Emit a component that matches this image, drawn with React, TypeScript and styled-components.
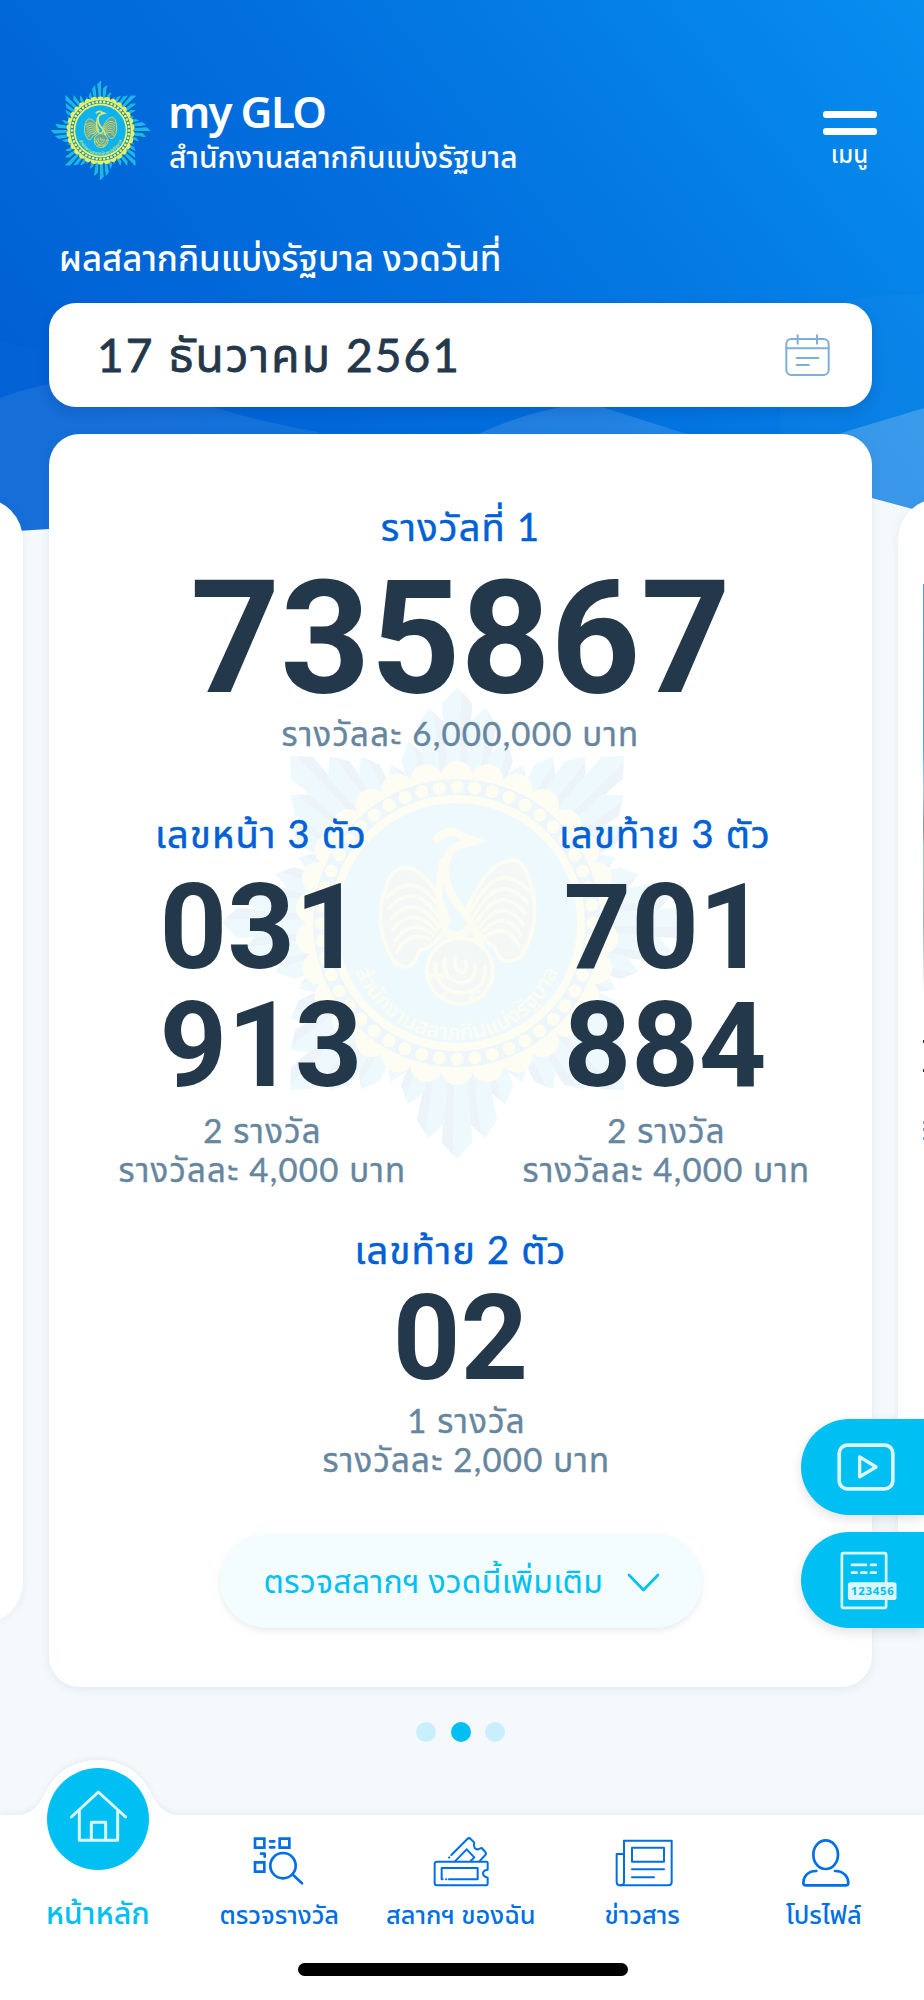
import React, { FC, ReactNode } from "react";
import styled, { createGlobalStyle } from "styled-components";

const colors = {
  white: "#ffffff",
  page: "#f5f9fc",
  blue: "#0060d6",
  navBlue: "#006fe6",
  cyan: "#00c0f3",
  ice: "#dcf6fe",
  navy: "#24384c",
  slate: "#66869f",
};

const fonts = {
  thai: `"Noto Sans Thai", "Noto Sans", sans-serif`,
  mixed: `Lato, "Noto Sans Thai", "Noto Sans", sans-serif`,
  digits: `Roboto, sans-serif`,
};

const GlobalStyle = createGlobalStyle`
  * {
    box-sizing: border-box;
  }
  body {
    margin: 0;
    background: ${colors.page};
    font-family: ${fonts.thai};
  }
`;

const Screen = styled.div`
  position: relative;
  display: flex;
  flex-direction: column;
  width: 924px;
  height: 2000px;
  overflow: hidden;
  background: ${colors.page};
`;

/* ---------- backdrop ---------- */

const Backdrop = styled.svg`
  position: absolute;
  top: 0;
  left: 0;
`;

const HeaderBackdrop: FC = () => (
  <Backdrop width="924" height="540" viewBox="0 0 924 540">
    <defs>
      <linearGradient id="sky" gradientUnits="userSpaceOnUse" x1="120" y1="470" x2="840" y2="-100">
        <stop offset="0" stopColor="#0061d5" />
        <stop offset="0.4" stopColor="#026edd" />
        <stop offset="0.72" stopColor="#047fe6" />
        <stop offset="1" stopColor="#078eef" />
      </linearGradient>
      <clipPath id="skyClip">
        <path d="M0 0H924V512L872 498L700 460H300L49 529L0 532Z" />
      </clipPath>
    </defs>
    <g clipPath="url(#skyClip)">
      <rect width="924" height="540" fill="url(#sky)" />
      <path d="M0 341L60 356L200 400V540H0Z" fill="#fff" opacity="0.01" />
      <path d="M850 300Q885 294 924 294V540H780V320Z" fill="#fff" opacity="0.025" />
      <path d="M0 398Q60 374 130 386L213 407Q265 423 318 432L360 540H0Z" fill="#fff" opacity="0.08" />
      <path d="M478 434Q560 398 602 407L690 435V540H478Z" fill="#fff" opacity="0.13" />
      <path d="M838 434L924 408V540H838Z" fill="#fff" opacity="0.2" />
    </g>
  </Backdrop>
);

/* ---------- emblem ---------- */

// lengths of the pleats from one tip of the star to the next
const cardinalPleats = [236, 217, 188];
const diagonalPleats = [236, 210, 192];

const spikeLength = (index: number): number => {
  const step = index % 6;
  if (step === 3) {
    return 172;
  }
  const pleats = Math.round(index / 6) % 2 === 1 ? diagonalPleats : cardinalPleats;
  return pleats[Math.min(step, 6 - step)];
};

const polar = (radius: number, degrees: number): string => {
  const a = (degrees * Math.PI) / 180;
  return `${(radius * Math.sin(a)).toFixed(1)},${(-radius * Math.cos(a)).toFixed(1)}`;
};

const spikes = Array.from({ length: 48 }, (_, i) => ({ angle: i * 7.5, length: spikeLength(i) }));
const beads = Array.from({ length: 48 }, (_, i) => polar(136, i * 7.5).split(","));
const scallops = Array.from({ length: 30 }, (_, i) => polar(146, i * 12).split(","));
const feathers = [0, 1, 2, 3, 4, 5];

interface EmblemProps {
  size: number;
  id: string;
}

const Emblem: FC<EmblemProps> = ({ size, id }) => (
  <svg width={size} height={size} viewBox="-240 -240 480 480">
    <defs>
      <path id={`${id}-arc`} d="M-109 8A109 109 0 0 0 109 8" />
    </defs>
    {spikes.map(({ angle, length }) => (
      <g key={angle}>
        <polygon points={`0,0 ${polar(length - 16, angle - 4)} ${polar(length, angle)} ${polar(length - 4, angle + 1)}`} fill="#1ab6f0" />
        <polygon points={`0,0 ${polar(length - 4, angle + 1)} ${polar(length - 16, angle + 4)}`} fill="#0b69b4" />
      </g>
    ))}
    {scallops.map(([x, y]) => (
      <circle key={`${x}${y}`} cx={x} cy={y} r="16" fill="#e9ee62" />
    ))}
    <circle r="149" fill="#f1f06a" />
    <circle r="136" fill="none" stroke="#0f8fc4" strokeWidth="16" />
    {beads.map(([x, y]) => (
      <circle key={`${x}${y}`} cx={x} cy={y} r="6.5" fill="#f3f15c" />
    ))}
    <circle r="120" fill="#0eb2ee" />
    <g fill="none" stroke="#e2e46a" strokeWidth="3.6" strokeLinecap="round">
      <path d="M-8 -2C-20 -44 -52 -72 -68 -44Q-88 0 -62 40Q-44 52 -38 28Q-20 24 -8 -2Z" fill="#5fa89c" />
      <path d="M10 -12C24 -54 58 -80 70 -50Q88 -6 64 34Q44 46 38 24Q22 16 10 -12Z" fill="#5fa89c" />
      {feathers.map((n) => (
        <g key={n}>
          <path d={`M${-12 - n * 3} ${-4 + n * 4}Q${-38 - n * 2} ${-58 + n * 13} ${-70 + n * 2} ${-26 + n * 11}`} />
          <path d={`M${14 + n * 3} ${-12 + n * 5}Q${40 + n * 2} ${-66 + n * 13} ${72 - n * 2} ${-32 + n * 11}`} />
        </g>
      ))}
      <path d="M-20 -84Q-6 -98 6 -86L18 -82L4 -78Q-12 -74 -12 -52Q-10 -28 8 -10Q22 8 26 34" strokeWidth="8" />
      <path d="M-14 -62Q-24 -18 -10 10Q6 18 14 0" strokeWidth="7" />
      <circle cx="3" cy="48" r="33" fill="#5fa89c" />
      <path d="M-22 40Q-22 68 4 70Q30 68 28 44M-12 36Q-14 58 4 60Q20 58 18 42M-2 34Q-4 48 6 50Q12 46 8 38" />
      <path d="M-28 56Q-22 48 -14 54M-14 74Q-10 64 -2 70M14 76Q14 66 22 68" />
    </g>
    <text fontFamily="Noto Sans Thai" fontSize="22" fontWeight="600" fill="#d9e45a">
      <textPath href={`#${id}-arc`} startOffset="50%" textAnchor="middle">
        สำนักงานสลากกินแบ่งรัฐบาล
      </textPath>
    </text>
  </svg>
);

/* ---------- header ---------- */

const Header = styled.header`
  position: relative;
  display: flex;
  align-items: flex-start;
  height: 180px;
  padding: 80px 47px 0 50px;
  color: ${colors.white};
`;

const Brand = styled.div`
  flex: 1;
  padding: 11px 0 0 17px;
`;

const BrandName = styled.h1`
  margin: 0;
  font-size: 44px;
  font-weight: 600;
  line-height: 48px;
  letter-spacing: -1.8px;
`;

const BrandOffice = styled.div`
  padding-left: 1px;
  font-size: 30px;
  font-weight: 500;
  line-height: 40px;
  white-space: nowrap;
`;

const MenuButton = styled.div`
  display: flex;
  flex-direction: column;
  align-items: center;
  gap: 10px;
  padding-top: 31px;
  font-size: 24px;
  font-weight: 500;
  line-height: 30px;
`;

const MenuBar = styled.span`
  width: 54px;
  height: 7px;
  border-radius: 3px;
  background: ${colors.white};
`;

const MenuLabel = styled.span`
  margin: -4px 0 0 -1px;
`;

/* ---------- draw date ---------- */

const DrawLabel = styled.div`
  position: relative;
  margin: 56px 0 17px 59px;
  font-size: 34.8px;
  font-weight: 500;
  line-height: 50px;
  color: ${colors.white};
`;

const DateField = styled.div`
  position: relative;
  display: flex;
  flex: none;
  align-items: center;
  justify-content: space-between;
  width: 823px;
  height: 104px;
  margin-left: 49px;
  padding: 0 42px 0 48px;
  border-radius: 27px;
  background: ${colors.white};
  box-shadow: 0 5px 12px rgba(0, 50, 130, 0.2);
  font-family: ${fonts.mixed};
  font-size: 46px;
  font-weight: 400;
  line-height: 60px;
  letter-spacing: 2.1px;
  -webkit-text-stroke: 0.8px ${colors.navy};
  color: ${colors.navy};
`;

const CalendarIcon: FC = () => (
  <svg width="45" height="43" viewBox="677 820 135 129" fill="none" stroke="#80aeda" strokeWidth="6" strokeLinecap="round">
    <rect x="681" y="835" width="127" height="108" rx="15" />
    <path d="M681 863H808M715 824V849M773 824V849M712 892H777M712 913H748" />
  </svg>
);

/* ---------- result cards ---------- */

const Carousel = styled.div`
  position: relative;
  display: flex;
  flex: none;
  align-items: center;
  justify-content: center;
  gap: 26px;
  width: 921px;
  margin-top: 27px;
`;

const SideCard = styled.div`
  flex: none;
  width: 743px;
  height: 1126px;
  padding: 86px 25px;
  border-radius: 42px;
  background: ${colors.white};
  box-shadow: 0 0 10px rgba(40, 80, 120, 0.08);
`;

const PeekArtwork = styled.div`
  height: 409px;
  margin-bottom: 47px;
  background: linear-gradient(#5a9be0, #4fa9e0 40%, #a9cfe0 50%, #8a8f90 60%, #9cc8bd 64%, #a3b8ac 84%, #fff);
`;

const PeekLine = styled.div<{ $color: string; $gap: number }>`
  height: 3px;
  margin-bottom: ${(p) => p.$gap}px;
  background: ${(p) => p.$color};
`;

const Card = styled.main`
  position: relative;
  display: flex;
  flex: none;
  flex-direction: column;
  align-items: center;
  width: 823px;
  height: 1253px;
  padding-top: 67px;
  border-radius: 31px;
  background: ${colors.white};
  box-shadow: 0 2px 10px rgba(40, 80, 120, 0.1);
`;

const Watermark = styled.div`
  position: absolute;
  top: 249px;
  left: 168px;
  opacity: 0.07;
`;

const PrizeTitle = styled.h2`
  position: relative;
  margin: 0;
  font-family: ${fonts.mixed};
  font-size: 38px;
  font-weight: 400;
  line-height: 50px;
  letter-spacing: 1.2px;
  -webkit-text-stroke: 0.5px ${colors.blue};
  color: ${colors.blue};
`;

const PrizeNumber = styled.div<{ $large?: boolean }>`
  position: relative;
  font-family: ${fonts.digits};
  font-size: ${(p) => (p.$large ? 157 : 118)}px;
  font-weight: 700;
  line-height: ${(p) => (p.$large ? 150 : 118)}px;
  color: ${colors.navy};
`;

const PrizeNumbers = styled.div<{ $top: number; $bottom: number }>`
  margin: ${(p) => p.$top}px 0 ${(p) => p.$bottom}px;
`;

const PrizeNote = styled.div<{ $shift?: number }>`
  position: relative;
  padding-left: ${(p) => p.$shift || 0}px;
  font-family: ${fonts.mixed};
  font-size: 33px;
  font-weight: 400;
  line-height: 39px;
  letter-spacing: 1.25px;
  -webkit-text-stroke: 0.4px ${colors.slate};
  text-align: center;
  color: ${colors.slate};
`;

const PrizeColumns = styled.div`
  display: grid;
  grid-template-columns: 404px 404px;
  margin: 55px 0 35px;
  padding-left: 5px;
`;

const PrizeColumn = styled.section`
  display: flex;
  flex-direction: column;
  align-items: center;
`;

const MoreButton = styled.div`
  display: flex;
  align-items: center;
  justify-content: space-between;
  width: 482px;
  height: 94px;
  margin-top: 55px;
  padding: 3px 42px 0 44px;
  border-radius: 47px;
  background: #f3fdff;
  box-shadow: 0 3px 6px rgba(0, 0, 0, 0.08);
  font-size: 32px;
  letter-spacing: 0.25px;
  line-height: 60px;
  color: ${colors.cyan};
`;

const Pager = styled.div`
  display: flex;
  justify-content: center;
  gap: 14.5px;
  width: 921px;
  margin-top: 34.5px;
`;

const Dot = styled.span<{ $active?: boolean }>`
  width: 20px;
  height: 20px;
  border-radius: 50%;
  background: ${(p) => (p.$active ? colors.cyan : "#caeffc")};
`;

/* ---------- floating shortcuts ---------- */

const Shortcuts = styled.div`
  position: absolute;
  top: 1418.5px;
  right: 0;
  display: flex;
  flex-direction: column;
  gap: 17px;
`;

const Shortcut = styled.div`
  width: 123px;
  height: 96px;
  border-radius: 48px 0 0 48px;
  background: ${colors.cyan};
  box-shadow: 0 4px 12px rgba(0, 0, 0, 0.12);
`;

/* ---------- bottom navigation ---------- */

const NavBar = styled.nav`
  position: relative;
  height: 185px;
  margin-top: auto;
  background: ${colors.white};
  box-shadow: 0 0 8px rgba(60, 90, 120, 0.12);
`;

const NavBump = styled.svg`
  position: absolute;
  top: -67px;
  left: 0;
`;

const BumpShape = styled.path`
  fill: ${colors.white};
  filter: drop-shadow(0 -2px 2px rgba(60, 90, 120, 0.08));
`;

const NavItems = styled.div`
  position: relative;
  display: grid;
  grid-template-columns: repeat(5, 181.5px);
  height: 118px;
  padding-left: 7px;
`;

const NavItem = styled.div`
  display: flex;
  flex-direction: column;
  align-items: center;
  gap: 10px;
  padding-top: 20px;
  font-size: 25.4px;
  font-weight: 500;
  line-height: 39px;
  white-space: nowrap;
  color: ${colors.navBlue};

  svg {
    flex: none;
    overflow: visible;
  }
`;

const HomeItem = styled(NavItem)`
  gap: 27px;
  margin-top: -47px;
  padding-top: 0;
  font-size: 30.5px;
  line-height: 36px;
  color: ${colors.cyan};
`;

const HomeCircle = styled.span`
  width: 102px;
  height: 102px;
  border-radius: 50%;
  background: ${colors.cyan};
`;

const HomeIndicator = styled.div`
  width: 330px;
  height: 13px;
  margin: 30px 0 0 298px;
  border-radius: 7px;
  background: #000;
`;

interface NavIconProps {
  x: number;
  y?: number;
  strokeWidth: number;
  children: ReactNode;
}

const NavIcon: FC<NavIconProps> = ({ x, y = 405, strokeWidth, children }) => (
  <svg
    width="60"
    height="52"
    viewBox={`${x} ${y} 180 156`}
    fill="none"
    stroke="currentColor"
    strokeWidth={strokeWidth}
    strokeLinecap="round"
    strokeLinejoin="round"
  >
    {children}
  </svg>
);

const prizeColumns = [
  { title: "เลขหน้า 3 ตัว", numbers: ["031", "913"] },
  { title: "เลขท้าย 3 ตัว", numbers: ["701", "884"] },
];

const App: FC = () => (
  <Screen>
    <GlobalStyle />
    <HeaderBackdrop />

    <Header>
      <Emblem size={101} id="logo" />
      <Brand>
        <BrandName>my GLO</BrandName>
        <BrandOffice>สำนักงานสลากกินแบ่งรัฐบาล</BrandOffice>
      </Brand>
      <MenuButton>
        <MenuBar />
        <MenuBar />
        <MenuLabel>เมนู</MenuLabel>
      </MenuButton>
    </Header>

    <DrawLabel>ผลสลากกินแบ่งรัฐบาล งวดวันที่</DrawLabel>
    <DateField>
      <span>17 ธันวาคม 2561</span>
      <CalendarIcon />
    </DateField>

    <Carousel>
      <SideCard />
      <Card>
        <Watermark>
          <Emblem size={480} id="watermark" />
        </Watermark>

        <PrizeTitle>รางวัลที่ 1</PrizeTitle>
        <PrizeNumbers $top={12} $bottom={1}>
          <PrizeNumber $large>735867</PrizeNumber>
        </PrizeNumbers>
        <PrizeNote>รางวัลละ 6,000,000 บาท</PrizeNote>

        <PrizeColumns>
          {prizeColumns.map(({ title, numbers }) => (
            <PrizeColumn key={title}>
              <PrizeTitle>{title}</PrizeTitle>
              <PrizeNumbers $top={11} $bottom={6}>
                {numbers.map((n) => (
                  <PrizeNumber key={n}>{n}</PrizeNumber>
                ))}
              </PrizeNumbers>
              <PrizeNote $shift={3}>2 รางวัล</PrizeNote>
              <PrizeNote $shift={3}>รางวัลละ 4,000 บาท</PrizeNote>
            </PrizeColumn>
          ))}
        </PrizeColumns>

        <PrizeTitle>เลขท้าย 2 ตัว</PrizeTitle>
        <PrizeNumbers $top={6} $bottom={3}>
          <PrizeNumber>02</PrizeNumber>
        </PrizeNumbers>
        <PrizeNote $shift={12}>1 รางวัล</PrizeNote>
        <PrizeNote $shift={12}>รางวัลละ 2,000 บาท</PrizeNote>

        <MoreButton>
          <span>ตรวจสลากฯ งวดนี้เพิ่มเติม</span>
          <svg width="33" height="19" viewBox="0 0 33 19" fill="none" stroke="currentColor" strokeWidth="2.6" strokeLinecap="round" strokeLinejoin="round">
            <path d="M2 2L16.5 17L31 2" />
          </svg>
        </MoreButton>
      </Card>
      <SideCard>
        <PeekArtwork />
        <PeekLine $color={colors.navy} $gap={26} />
        <PeekLine $color={colors.navy} $gap={49} />
        <PeekLine $color="#6da3dc" $gap={4} />
        <PeekLine $color="#6da3dc" $gap={6} />
        <PeekLine $color="#6da3dc" $gap={0} />
      </SideCard>
    </Carousel>

    <Pager>
      <Dot />
      <Dot $active />
      <Dot />
    </Pager>

    <Shortcuts>
      <Shortcut>
        <svg width="123" height="96" viewBox="184 117 367 286" fill="none" stroke={colors.ice} strokeLinejoin="round">
          <rect x="298" y="195" width="160" height="130" rx="24" strokeWidth="11" />
          <path d="M359 230V289L408 260Z" strokeWidth="10" />
        </svg>
      </Shortcut>
      <Shortcut>
        <svg width="123" height="96" viewBox="184 457 367 286" fill="none" stroke={colors.ice}>
          <rect x="306" y="520" width="132" height="163" rx="5" strokeWidth="8" />
          <path d="M336 555H378M393 555H407M336 578H350M364 578H379M393 578H407" strokeWidth="8" strokeLinecap="round" />
          <rect x="324" y="607" width="145" height="53" rx="8" fill={colors.ice} stroke="none" />
          <text
            x="333"
            y="645"
            textLength="128"
            fontFamily="Open Sans"
            fontSize="34"
            fontWeight="700"
            fill={colors.cyan}
            stroke="none"
          >
            123456
          </text>
        </svg>
      </Shortcut>
    </Shortcuts>

    <NavBar>
      <NavBump width="200" height="69" viewBox="0 0 200 69">
        <BumpShape d="M20 67C32 66 40 55 44 47C54 24 74 12 98 12C122 12 142 24 152 47C156 55 164 66 176 67" />
        <path d="M14 67H182V69H14Z" fill={colors.white} />
      </NavBump>
      <NavItems>
        <HomeItem>
          <HomeCircle>
            <svg width="102" height="102" viewBox="141 205 306 306" fill="none" stroke={colors.ice} strokeWidth="9" strokeLinecap="round" strokeLinejoin="round">
              <path d="M214 352L295 277L377 352M238 334V422H353V334M274 420V368H317V420" />
            </svg>
          </HomeCircle>
          <span>หน้าหลัก</span>
        </HomeItem>
        <NavItem>
          <NavIcon x={748} strokeWidth={8}>
            <path d="M766 416H794V443H766ZM840 416H869V443H840ZM766 487H794V515H766Z" strokeLinejoin="miter" />
            <path d="M811 424H824M811 442H824M784 461H795V470" />
            <circle cx="850" cy="497" r="38" />
            <path d="M878 523L907 550" />
          </NavIcon>
          <span>ตรวจรางวัล</span>
        </NavItem>
        <NavItem>
          <NavIcon x={32} y={45} strokeWidth={6}>
            <path d="M51 125H199Q202 125 202 129V149Q188 151 188 160Q188 170 202 173V192Q202 196 198 196H49Q43 196 43 190V131Q43 125 51 125Z" />
            <path d="M86 178H172V144H64V178H67M77 178H78" />
            <path d="M86 113L87 112M93 105L141 57Q146 52 151 57L162 68Q158 76 163 84Q170 91 178 86L184 84L195 96Q199 101 195 105L177 124" />
            <path d="M104 124L139 88L162 112L151 123" />
          </NavIcon>
          <span>สลากฯ ของฉัน</span>
        </NavItem>
        <NavItem>
          <NavIcon x={456} strokeWidth={6}>
            <path d="M492 422H635V546Q635 556 625 556H481Q470 556 470 545V462H491" />
            <path d="M492 422V546Q492 556 482 556" />
            <path d="M516 443H612V485H516ZM516 508H612M516 532H582" />
          </NavIcon>
          <span>ข่าวสาร</span>
        </NavItem>
        <NavItem>
          <NavIcon x={1001} strokeWidth={8}>
            <ellipse cx="1096" cy="464" rx="37" ry="43" />
            <path d="M1068 513C1040 513 1029 532 1029 549Q1029 556 1037 556H1156Q1164 556 1164 549C1164 532 1152 513 1124 513" />
          </NavIcon>
          <span>โปรไฟล์</span>
        </NavItem>
      </NavItems>
      <HomeIndicator />
    </NavBar>
  </Screen>
);

export default App;
